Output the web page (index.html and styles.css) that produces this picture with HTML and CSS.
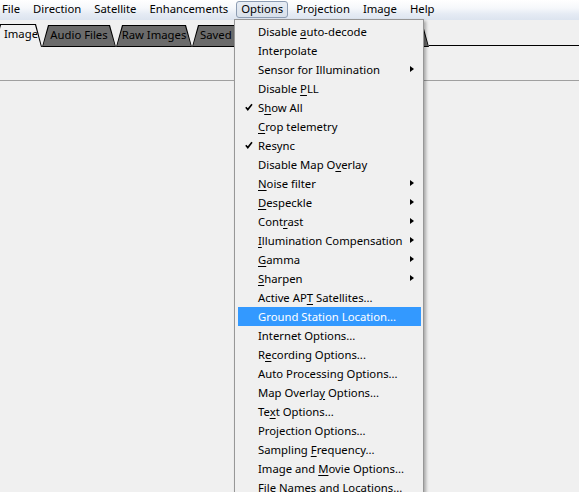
FILE: index.html
```html
<!DOCTYPE html>
<html>
<head>
<meta charset="utf-8">
<link rel="stylesheet" href="styles.css">
</head>
<body>
<div class="menubar">
  <span class="mi first">File</span>
  <span class="mi">Direction</span>
  <span class="mi">Satellite</span>
  <span class="mi">Enhancements</span>
  <span class="mi open">Options</span>
  <span class="mi">Projection</span>
  <span class="mi">Image</span>
  <span class="mi">Help</span>
</div>
<div class="tabstrip">
  <div class="tab sel"><span>Image</span></div>
  <div class="tab t-audio"><span>Audio Files</span></div>
  <div class="tab t-raw"><span>Raw Images</span></div>
  <div class="tab t-saved"><span>Saved Images</span></div>
  <div class="fill"></div>
</div>
<div class="panel"></div>

<div class="dropdown">
  <div class="row"><span class="gut"></span><span class="lbl">Disable <u>a</u>uto-decode</span></div>
  <div class="row"><span class="gut"></span><span class="lbl">Interpolate</span></div>
  <div class="row"><span class="gut"></span><span class="lbl">Sensor for Illumination</span><span class="arr"></span></div>
  <div class="row"><span class="gut"></span><span class="lbl">Disable <u>P</u>LL</span></div>
  <div class="row"><span class="gut"><svg class="chk" width="8" height="8" viewBox="0 0 8 8"><path d="M0.8 4.2 L2.8 6.6 L7 1.2" fill="none" stroke="#000" stroke-width="1.6"/></svg></span><span class="lbl">S<u>h</u>ow All</span></div>
  <div class="row"><span class="gut"></span><span class="lbl"><u>C</u>rop telemetry</span></div>
  <div class="row"><span class="gut"><svg class="chk" width="8" height="8" viewBox="0 0 8 8"><path d="M0.8 4.2 L2.8 6.6 L7 1.2" fill="none" stroke="#000" stroke-width="1.6"/></svg></span><span class="lbl">Resync</span></div>
  <div class="row"><span class="gut"></span><span class="lbl">Disable Map O<u>v</u>erlay</span></div>
  <div class="row"><span class="gut"></span><span class="lbl"><u>N</u>oise filter</span><span class="arr"></span></div>
  <div class="row"><span class="gut"></span><span class="lbl"><u>D</u>especkle</span><span class="arr"></span></div>
  <div class="row"><span class="gut"></span><span class="lbl">Cont<u>r</u>ast</span><span class="arr"></span></div>
  <div class="row"><span class="gut"></span><span class="lbl"><u>I</u>llumination Compensation</span><span class="arr"></span></div>
  <div class="row"><span class="gut"></span><span class="lbl"><u>G</u>amma</span><span class="arr"></span></div>
  <div class="row"><span class="gut"></span><span class="lbl"><u>S</u>harpen</span><span class="arr"></span></div>
  <div class="row"><span class="gut"></span><span class="lbl">Active AP<u>T</u> Satellites...</span></div>
  <div class="row hl"><span class="gut"></span><span class="lbl">Ground Station Location...</span></div>
  <div class="row"><span class="gut"></span><span class="lbl">Internet Options...</span></div>
  <div class="row"><span class="gut"></span><span class="lbl">R<u>e</u>cording Options...</span></div>
  <div class="row"><span class="gut"></span><span class="lbl">Auto Processing Options...</span></div>
  <div class="row"><span class="gut"></span><span class="lbl">Map Overla<u>y</u> Options...</span></div>
  <div class="row"><span class="gut"></span><span class="lbl">Te<u>x</u>t Options...</span></div>
  <div class="row"><span class="gut"></span><span class="lbl">Projection Options...</span></div>
  <div class="row"><span class="gut"></span><span class="lbl">Sampling <u>F</u>requency...</span></div>
  <div class="row"><span class="gut"></span><span class="lbl">Image and <u>M</u>ovie Options...</span></div>
  <div class="row"><span class="gut"></span><span class="lbl">File Names and Locations...</span></div>
</div>
</body>
</html>
```
FILE: styles.css
```css
html, body {
  margin: 0;
  padding: 0;
}
body {
  width: 579px;
  height: 492px;
  overflow: hidden;
  background: #f0f0f0;
  font-family: "Noto Sans", "Open Sans", sans-serif;
  font-size: 11.3px;
  color: #000;
  position: relative;
}

/* menu bar */
.menubar {
  height: 20px;
  display: flex;
  align-items: flex-start;
  padding-top: 1px;
  gap: 3px;
  background: linear-gradient(#ffffff 0%, #f6f8fb 40%, #e5ebf4 70%, #dce4ef 100%);
  box-sizing: border-box;
}
.mi {
  box-sizing: border-box;
  height: 17px;
  line-height: 14px;
  padding: 0 4px;
  border: 1px solid transparent;
  border-radius: 3px;
  white-space: nowrap;
}
.mi.first {
  margin-left: -3px;
}
.mi.open {
  border-color: #8d9db3;
  background: linear-gradient(#e8edf4, #d8e0ea);
}

/* tabs */
.tabstrip {
  height: 27px;
  display: flex;
  align-items: flex-end;
}
.tab {
  flex: none;
  box-sizing: border-box;
  height: 22px;
  padding: 1px;
  background: #000;
  clip-path: polygon(0 100%, 6px 0, calc(100% - 6px) 0, 100% 100%);
}
.tab span {
  display: block;
  height: 20px;
  line-height: 18px;
  text-align: center;
  white-space: nowrap;
  overflow: hidden;
  background: #6b6b6b;
  clip-path: polygon(0 100%, 6px 0, calc(100% - 6px) 0, 100% 100%);
}
.tab.sel {
  height: 23px;
  width: 48px;
  margin-left: -6px;
  padding: 1px 1px 0 1px;
}
.tab.sel span {
  height: 22px;
  line-height: 18px;
  background: #f0f0f0;
  padding-left: 6px;
}
.t-audio { width: 74px; }
.t-raw { width: 76px; }
.t-saved { width: 237px; }
.t-saved span { text-align: left; padding-left: 7px; }
.fill {
  flex: 1;
  height: 1px;
  background: #000;
  position: relative;
  top: -1px;
}

.panel {
  height: 33px;
  border-bottom: 1px solid #a0a0a0;
}

/* dropdown */
.dropdown {
  position: absolute;
  left: 234px;
  top: 19px;
  width: 190px;
  box-sizing: border-box;
  padding: 2px;
  background: #f0f0f0;
  border: 1px solid #979797;
  box-shadow: 2px 2px 3px rgba(0, 0, 0, 0.3);
  z-index: 5;
}
.row {
  box-sizing: border-box;
  height: 19px;
  padding-bottom: 1px;
  display: flex;
  align-items: center;
  white-space: nowrap;
  margin-left: 1px;
}
.gut {
  width: 20px;
  flex: none;
  display: flex;
  align-items: center;
}
.chk {
  margin-left: 7px;
  display: block;
}
.lbl {
  flex: 1;
}
.lbl u {
  text-decoration-thickness: 1px;
  text-underline-offset: 2px;
}
.arr {
  flex: none;
  width: 0;
  height: 0;
  border-top: 3.5px solid transparent;
  border-bottom: 3.5px solid transparent;
  border-left: 4px solid #000;
  margin-right: 7px;
}
.row.hl {
  background: #3399ff;
  color: #fff;
}
```
